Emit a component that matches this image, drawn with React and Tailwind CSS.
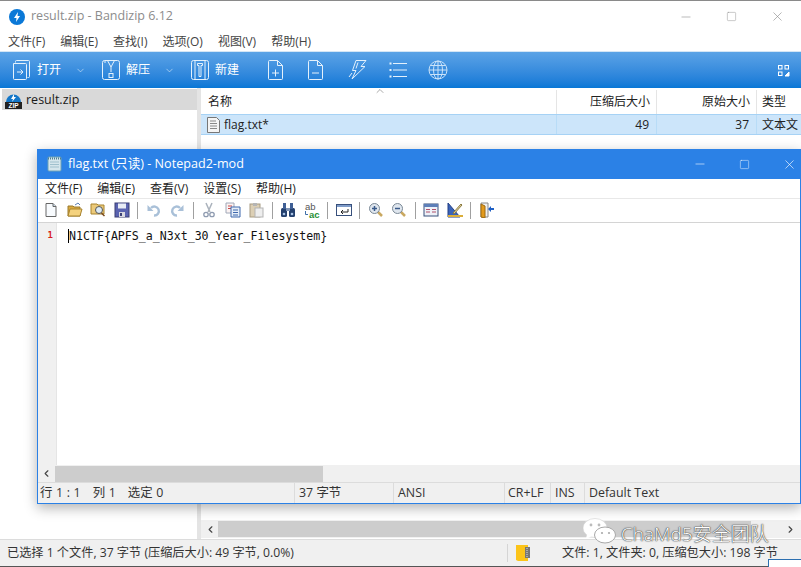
import { ChevronDown, ChevronLeft, ChevronRight, ChevronUp, Minus, Square, X } from 'lucide-react';

const uiFont = 'font-["Open_Sans","Noto_Sans_CJK_SC",sans-serif]';

function OutlineIcon({ children, w = 20 }) {
  return (
    <svg width={w} height="22" viewBox={`0 0 ${w} 22`} fill="none" stroke="#e4f1fc" strokeWidth="1" className="shrink-0">
      {children}
    </svg>
  );
}

const OpenIcon = () => (
  <OutlineIcon>
    <path d="M3.5 3.5V2.5a1 1 0 0 1 1-1h12a1 1 0 0 1 1 1v15a1 1 0 0 1-1 1h-1" />
    <path d="M1.5 4.5h12a1 1 0 0 1 1 1v14a1 1 0 0 1-1 1h-11a1 1 0 0 1-1-1z" />
    <path d="M5 13h6M8.5 10.5L11 13l-2.5 2.5" />
  </OutlineIcon>
);

const ZipIcon = () => (
  <OutlineIcon>
    <rect x="1.5" y="1.5" width="17" height="19" rx="2" />
    <path d="M4 1.5V4" />
    <path d="M6.5 1.5L10 8l3.5-6.5M10 8v5" />
    <rect x="8" y="14.5" width="4" height="4" />
  </OutlineIcon>
);

const NewIcon = () => (
  <OutlineIcon>
    <rect x="1.5" y="1.5" width="17" height="19" rx="2" />
    <path d="M5 1.5v19M15 1.5v19" />
    <path d="M7.5 4.5h5v2h-1.5v11h-2v-11h-1.5z" />
  </OutlineIcon>
);

const PageIcon = ({ plus }) => (
  <OutlineIcon>
    <path d="M2.5 2.5a1 1 0 0 1 1-1h8l5 5v13a1 1 0 0 1-1 1h-12a1 1 0 0 1-1-1z" />
    <path d="M11.5 1.5v5h5" />
    <path d="M6 14h7" />
    {plus && <path d="M9.5 10.5v7" />}
  </OutlineIcon>
);

const BoltIcon = () => (
  <OutlineIcon>
    <path d="M8 1.5h10l-5 6h4L4 20l4-8.5H4.5z" />
    <path d="M10 3.5l-2 6" />
    <path d="M1 18l3-4" />
  </OutlineIcon>
);

const ListIcon = () => (
  <OutlineIcon>
    <path d="M5 4.5h14M5 11h14M5 17.5h14" />
    <path d="M1.5 4.5h2M1.5 11h2M1.5 17.5h2" strokeWidth="2" />
  </OutlineIcon>
);

const GlobeIcon = () => (
  <svg width="20" height="20" viewBox="0 0 20 20" fill="none" stroke="#c9e2f9" strokeWidth="1" className="shrink-0">
    <circle cx="10" cy="10" r="9" />
    <ellipse cx="10" cy="10" rx="4.5" ry="9" />
    <path d="M10 1v18M1 10h18M2.5 5.5h15M2.5 14.5h15" />
  </svg>
);

function ToolButton({ icon, label, arrow }) {
  return (
    <div className="flex items-center h-full">
      {icon}
      <span className="ml-[5px] text-white text-[12px]">{label}</span>
      {arrow && <ChevronDown size={11} strokeWidth={1.25} className="text-[#e4f1fc] ml-[14px]" />}
    </div>
  );
}

function BandizipTitle() {
  return (
    <div className="h-[30px] flex items-center pl-[9px] pt-[1px] bg-white">
      <div className="w-[16px] h-[16px] rounded-full bg-[#0a78d7] flex items-center justify-center">
        <svg width="8" height="10" viewBox="0 0 8 10" fill="white"><path d="M5 0L1 6h2.5L3 10l4-6H4.5z" /></svg>
      </div>
      <span className="ml-[6px] text-[12.5px] text-[#8c8c8c]">result.zip - Bandizip 6.12</span>
      <div className="ml-auto flex items-center text-[#8a8a8a]">
        <Minus size={14} strokeWidth={1} className="mr-[33px]" />
        <Square size={11} strokeWidth={1} className="mr-[33px]" />
        <X size={15} strokeWidth={1} className="mr-[16px]" />
      </div>
    </div>
  );
}

function BandizipToolbar() {
  return (
    <div className="h-[37px] flex items-center pl-[12px] pr-[11px] bg-gradient-to-b from-[#5ba3e6] to-[#0677d6] border-t border-[#d4e6f5]">
      <ToolButton icon={<OpenIcon />} label="打开" arrow />
      <div className="w-[15px]" />
      <ToolButton icon={<ZipIcon />} label="解压" arrow />
      <div className="w-[15px]" />
      <ToolButton icon={<NewIcon />} label="新建" />
      <div className="flex items-center gap-[20px] ml-[27px]">
        <PageIcon plus />
        <PageIcon />
        <div className="ml-[2px]"><BoltIcon /></div>
        <ListIcon />
        <GlobeIcon />
      </div>
      <svg width="13" height="13" viewBox="0 0 13 13" fill="none" stroke="white" className="ml-auto">
        <rect x="1.5" y="1.5" width="3.5" height="3.5" />
        <rect x="8" y="1.5" width="3.5" height="3.5" />
        <rect x="1.5" y="8" width="3.5" height="3.5" />
        <path d="M12 8v4H8z" fill="white" />
      </svg>
    </div>
  );
}

function FileIcon() {
  return (
    <svg width="13" height="16" viewBox="0 0 13 16" className="shrink-0">
      <path d="M.5.5h9l3 3v12H.5z" fill="#f4f4f4" stroke="#777" />
      <path d="M3 4h6M3 6.5h7M3 9h7M3 11.5h7" stroke="#888" />
    </svg>
  );
}

function ZipTreeIcon() {
  return (
    <svg width="17" height="17" viewBox="0 0 17 17" className="shrink-0">
      <path d="M1 10a7.5 7.5 0 0 1 15 0z" fill="#1377c9" />
      <path d="M9 2L6 7h2L7 10l4-5H9z" fill="white" />
      <rect x="0" y="10" width="17" height="7" fill="#222" />
      <text x="8.5" y="16" textAnchor="middle" fontSize="6.5" fontWeight="700" fill="white" fontFamily="Liberation Sans">ZIP</text>
    </svg>
  );
}

function FilePane() {
  return (
    <div className="flex-1 min-h-0 flex">
      <div className="w-[197px] pt-[1px] pl-[2px] bg-white">
        <div className="h-[21px] flex items-center pl-[3px] pt-[1px] bg-[#d9d9d9]">
          <ZipTreeIcon />
          <span className="ml-[4px] text-[12.5px] text-[#1a1a1a]">result.zip</span>
        </div>
      </div>
      <div className="w-[4px] bg-[#e4e4e4]" />
      <div className="flex-1 min-w-0 flex flex-col bg-white">
        <div className="relative h-[26px] flex text-[12px] text-[#222] pt-[2px]">
          <ChevronUp size={12} strokeWidth={1} className="absolute left-[173px] top-[-3px] text-[#555]" />
          <div className="w-[356px] flex items-center pl-[7px] border-r border-[#e5e5e5]">名称</div>
          <div className="w-[100px] flex items-center justify-end pr-[6px] border-r border-[#e5e5e5]">压缩后大小</div>
          <div className="w-[100px] flex items-center justify-end pr-[6px] border-r border-[#e5e5e5]">原始大小</div>
          <div className="flex-1 flex items-center pl-[5px]">类型</div>
        </div>
        <div className="h-[21px] flex text-[12px] text-[#222] bg-[#cce5fa] border-y border-[#a6d2f5]">
          <div className="w-[356px] flex items-center pl-[6px] border-r border-[#b8dcf7]">
            <FileIcon />
            <span className="ml-[4px]">flag.txt*</span>
          </div>
          <div className="w-[100px] flex items-center justify-end pr-[7px] border-r border-[#b8dcf7]">49</div>
          <div className="w-[100px] flex items-center justify-end pr-[7px] border-r border-[#b8dcf7]">37</div>
          <div className="flex-1 flex items-center pl-[5px] whitespace-nowrap">文本文</div>
        </div>
        <div className="flex-1" />
        <div className="h-[18px] flex items-center bg-[#f0f0f0] mb-[1px]">
          <ChevronLeft size={11} strokeWidth={2.5} className="ml-[4px] text-[#444]" />
          <div className="ml-[2px] w-[533px] h-[16px] bg-[#cdcdcd]" />
          <ChevronRight size={11} strokeWidth={2.5} className="ml-auto mr-[5px] text-[#444]" />
        </div>
      </div>
    </div>
  );
}

function BandizipStatus() {
  return (
    <div className="h-[28px] flex items-center bg-[#f0f0f0] border-t border-[#dcdcdc] border-b border-b-[#555] text-[12.2px] text-[#333]">
      <span className="ml-[7px]">已选择 1 个文件, 37 字节 (压缩后大小: 49 字节, 0.0%)</span>
      <div className="ml-auto h-full flex items-center">
        <div className="h-[18px] w-px bg-[#d5d5d5] mr-[8px]" />
        <svg width="16" height="18" viewBox="0 0 16 18" className="mr-[30px]">
          <path d="M0 1h12v16H2l-2-1z" fill="#fcc419" />
          <rect x="9" y="3" width="5" height="11" fill="#777" />
          <path d="M11 4v9" stroke="#ddd" strokeDasharray="1 1" />
        </svg>
        <span className="mr-[23px]">文件: 1, 文件夹: 0, 压缩包大小: 198 字节</span>
      </div>
    </div>
  );
}

// small coloured glyphs of the Notepad2 toolbar
function Np({ children, w = 16 }) {
  return (
    <svg width={w} height="16" viewBox={`0 0 ${w} 16`} className="shrink-0">
      {children}
    </svg>
  );
}

const Sep = () => <div className="w-px h-[17px] bg-[#a0a0a0]" />;

const Magnifier = ({ sign }) => (
  <Np>
    <path d="M10 10l4 4" stroke="#c9a860" strokeWidth="2.5" />
    <circle cx="6.5" cy="6.5" r="5" fill="#dfe6ee" stroke="#7a8896" />
    <path d="M4 6.5h5" stroke="#3a5a8a" strokeWidth="1.5" />
    {sign && <path d="M6.5 4v5" stroke="#3a5a8a" strokeWidth="1.5" />}
  </Np>
);

function NotepadToolbar() {
  return (
    <div className="h-[25px] flex items-center pl-[5px] pb-[1px] gap-[7.5px] border-y border-[#e8e8e8] border-b-[#d4d4d4]">
      <Np><path d="M3 1.5h7l3 3v10H3z" fill="#f8fbfe" stroke="#666" /><path d="M10 1.5v3h3" fill="#c9dcec" stroke="#666" /></Np>
      <Np><path d="M1 4h5l1 1h6v9H1z" fill="#d9a93f" stroke="#9a7a2e" /><path d="M3 7h12l-2 7H1z" fill="#f4d27e" stroke="#a8842f" /><path d="M8 3l3-2 2 2" stroke="#5a7fb5" fill="none" /></Np>
      <Np><path d="M1 2h6l1 1h6v9H1z" fill="#ecca7a" stroke="#a8842f" /><circle cx="9" cy="8" r="3.5" fill="#dcebf7" stroke="#555" /><path d="M11.5 11l3 3" stroke="#7a4b1e" strokeWidth="1.5" /></Np>
      <Np><rect x="1" y="1" width="14" height="14" fill="#5a63b0" stroke="#3a3f75" /><rect x="4" y="1.5" width="8" height="5" fill="#e8ecf5" /><rect x="5" y="10" width="6" height="5" fill="#d8d8e0" /><rect x="6" y="11" width="2" height="3" fill="#3a3f75" /></Np>
      <Sep />
      <Np><path d="M5 6a4.5 4.5 0 1 1 3 7.5" fill="none" stroke="#a9c0d8" strokeWidth="2.4" /><path d="M1.5 3v6h6z" fill="#a9c0d8" /></Np>
      <Np><path d="M11 6a4.5 4.5 0 1 0-3 7.5" fill="none" stroke="#a9c0d8" strokeWidth="2.4" /><path d="M14.5 3v6h-6z" fill="#a9c0d8" /></Np>
      <Sep />
      <Np><path d="M5 1l4 9M11 1L7 10" stroke="#aab2bc" strokeWidth="1.5" /><circle cx="5" cy="12.5" r="2.2" fill="none" stroke="#8f9bb0" strokeWidth="1.3" /><circle cx="11" cy="12.5" r="2.2" fill="none" stroke="#8f9bb0" strokeWidth="1.3" /></Np>
      <Np><path d="M1 1h8v10H1z" fill="#fbf3f3" stroke="#a0a8b8" /><path d="M3 4h4M3 6.5h4" stroke="#c84848" /><path d="M6 5h9v10H6z" fill="#e6eef8" stroke="#3f68ad" /><path d="M8 8h5M8 10.5h5M8 13h5" stroke="#3f68ad" /></Np>
      <Np><rect x="2" y="2" width="10" height="13" fill="#dccfb4" stroke="#a89c82" /><rect x="5" y="1" width="4" height="3" fill="#b5b5b5" /><rect x="7" y="6" width="8" height="9" fill="#eeeeee" stroke="#b4b4b4" /></Np>
      <Sep />
      <Np><rect x="1" y="6" width="6" height="9" rx="1.5" fill="#24406e" /><rect x="9" y="6" width="6" height="9" rx="1.5" fill="#24406e" /><rect x="3" y="1" width="3" height="6" fill="#3f5f95" /><rect x="10" y="1" width="3" height="6" fill="#3f5f95" /><rect x="6" y="6" width="4" height="3" fill="#8297b7" /><circle cx="4" cy="12" r="1.3" fill="#a9c3e6" /><circle cx="12" cy="12" r="1.3" fill="#a9c3e6" /></Np>
      <Np>
        <text x="1" y="7.5" fontSize="9.5" fill="#555" fontFamily="Liberation Sans">ab</text>
        <path d="M1.5 9v3.5h2.5" stroke="#3f6fa8" fill="none" />
        <text x="5" y="15.5" fontSize="9.5" fontWeight="700" fill="#1f8f35" fontFamily="Liberation Sans">ac</text>
      </Np>
      <Sep />
      <Np><rect x=".5" y="2.5" width="15" height="11" fill="white" stroke="#38507c" /><rect x="1" y="3" width="14" height="2" fill="#7f9cc9" /><path d="M12 7v3H5M7 8l-2 2 2 2" fill="none" stroke="#222" /></Np>
      <Sep />
      <Magnifier sign />
      <Magnifier />
      <Sep />
      <Np><rect x="1" y="2" width="14" height="12" fill="#eef1f8" stroke="#38507c" /><rect x="1" y="2" width="14" height="3" fill="#5d7fb8" /><path d="M3 7.5h4M9 7.5h4M3 10h4M9 10h4" stroke="#b0506b" /></Np>
      <Np><path d="M1 15V1l12 14z" fill="#3a63b8" stroke="#223f85" /><path d="M6 11l8-9 1 1-8 9z" fill="#e8d9a8" stroke="#8b7a3f" /><rect x="1" y="13" width="15" height="2" fill="#dbae3a" /></Np>
      <Sep />
      <Np><path d="M2 1h7v14H2z" fill="#f0f0f0" stroke="#888" /><path d="M2 2l4 2v12l-4-1z" fill="#e39a1c" stroke="#9c6a12" /><path d="M15 6h-3V4l-3 3 3 3V8h3z" fill="#1f5fc4" /></Np>
    </div>
  );
}

function NotepadWindow() {
  return (
    <div className="absolute left-[37px] top-[148px] w-[764px] h-[355px] flex flex-col bg-white border border-[#2b81e6] shadow-[0_4px_12px_rgba(0,0,0,0.3)]">
      <div className="h-[29px] flex items-center pl-[9px] pb-[1px] bg-[#2b81e6] text-white shrink-0">
        <svg width="15" height="16" viewBox="0 0 15 16" className="shrink-0">
          <rect x="1" y="1" width="13" height="14" rx="1" fill="#d5e6ec" stroke="#6ea3b6" />
          <path d="M1 2.5h13" stroke="#4d7f92" strokeDasharray="1 1" strokeWidth="2" />
          <path d="M3 6h9M3 8.5h9M3 11h9" stroke="#9fc0cd" />
        </svg>
        <span className="ml-[6px] text-[12.6px]">flag.txt (只读) - Notepad2-mod</span>
        <div className="ml-auto flex items-center">
          <Minus size={14} strokeWidth={1} className="mr-[32px]" />
          <Square size={11} strokeWidth={1} className="mr-[32px]" />
          <X size={15} strokeWidth={1} className="mr-[3px]" />
        </div>
      </div>
      <div className="h-[19px] flex items-center pl-[7px] gap-[15px] text-[12px] text-[#222] shrink-0">
        <span>文件(F)</span>
        <span>编辑(E)</span>
        <span>查看(V)</span>
        <span>设置(S)</span>
        <span>帮助(H)</span>
      </div>
      <NotepadToolbar />
      <div className="flex-1 min-h-0 flex">
        <div className="w-[18px] bg-[#f0f0f0] pt-[6px] pr-[3px] text-right font-['DejaVu_Sans_Mono',monospace] text-[9px] font-bold text-[#d81e1e]">
          1
        </div>
        <div className="flex-1 pt-[5px] pl-[11px] font-['DejaVu_Sans_Mono',monospace] text-[11.6px] text-[#111] border-l border-[#e5e5e5]">
          <span className="border-l border-black">N1CTF&#123;APFS_a_N3xt_30_Year_Filesystem&#125;</span>
        </div>
      </div>
      <div className="h-[17px] flex items-center bg-[#f0f0f0] shrink-0">
        <ChevronLeft size={11} strokeWidth={2.5} className="ml-[3px] text-[#444]" />
        <div className="ml-[3px] w-[268px] h-[16px] bg-[#cdcdcd]" />
      </div>
      <div className="h-[21px] flex items-center bg-[#f0f0f0] border-t border-[#dcdcdc] text-[12.4px] text-[#333] shrink-0">
        <div className="w-[257px] pl-[2px] h-full flex items-center gap-[12px] border-r border-[#dcdcdc] [word-spacing:0.4px]">
          <span>行 1 : 1</span>
          <span>列 1</span>
          <span>选定 0</span>
        </div>
        <div className="w-[99px] pl-[4px] h-full flex items-center border-r border-[#dcdcdc]">37 字节</div>
        <div className="w-[111px] pl-[4px] h-full flex items-center border-r border-[#dcdcdc]">ANSI</div>
        <div className="w-[46px] pl-[3px] h-full flex items-center border-r border-[#dcdcdc]">CR+LF</div>
        <div className="w-[34px] pl-[4px] h-full flex items-center border-r border-[#dcdcdc]">INS</div>
        <div className="flex-1 pl-[4px] h-full flex items-center">Default Text</div>
      </div>
    </div>
  );
}

function Watermark() {
  return (
    <div className="absolute left-[582px] top-[516px] flex items-start text-white text-[19px] font-light leading-[26px]">
      <svg width="36" height="28" viewBox="0 0 36 28" className="mr-[3px]">
        <ellipse cx="13" cy="11" rx="12" ry="9.5" fill="white" stroke="#c8c8c8" strokeWidth="0.5" />
        <path d="M5 17l-1 5 6-3z" fill="white" />
        <ellipse cx="23" cy="18" rx="10.5" ry="8" fill="white" stroke="#a8a8a8" />
        <circle cx="9" cy="8" r="1.4" fill="#bbb" />
        <circle cx="17" cy="8" r="1.4" fill="#bbb" />
        <circle cx="20" cy="16" r="1.1" fill="#aaa" />
        <circle cx="27" cy="16" r="1.1" fill="#aaa" />
      </svg>
      <span className="mt-[4px] [text-shadow:0_0_1px_#333,0_0_1px_#444,0_0_2px_#777]">ChaMd5安全团队</span>
    </div>
  );
}

export default function App() {
  return (
    <div className={`relative w-[801px] h-[567px] overflow-hidden flex flex-col bg-white border-t border-[#8a8a8a] ${uiFont}`}>
      <BandizipTitle />
      <div className="h-[20px] flex items-center pl-[8px] pt-[1px] gap-[15px] text-[12px] text-[#444] bg-white">
        <span>文件(F)</span>
        <span>编辑(E)</span>
        <span>查找(I)</span>
        <span>选项(O)</span>
        <span>视图(V)</span>
        <span>帮助(H)</span>
      </div>
      <BandizipToolbar />
      <FilePane />
      <BandizipStatus />
      <NotepadWindow />
      <Watermark />
      <div className="absolute right-0 bottom-0 w-[33px] h-[8px] bg-white border-t border-l border-[#2b6fb0]" />
    </div>
  );
}
